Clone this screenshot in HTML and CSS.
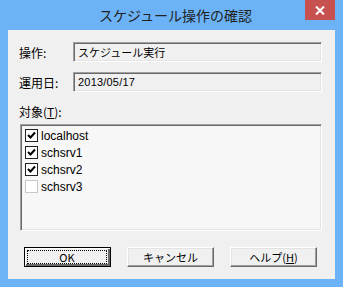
FILE: index.html
```html
<!DOCTYPE html>
<html lang="ja">
<head>
<meta charset="UTF-8" />
<meta name="viewport" content="width=device-width, initial-scale=1" />
<title>スケジュール操作の確認</title>
<link rel="stylesheet" href="styles.css">
</head>
<body>

<div class="window">
  <div class="titlebar">
    <span></span>
    <div class="title">スケジュール操作の確認</div>
    <button class="close" aria-label="閉じる">
      <svg width="10" height="9" viewBox="0 0 10 9"><path d="M1 0.5 L9 8.5 M9 0.5 L1 8.5" stroke="#fff" stroke-width="2"/></svg>
    </button>
  </div>

  <div class="client">
    <div class="row">
      <label class="label">操作:</label>
      <div class="field">スケジュール実行</div>
    </div>
    <div class="row">
      <label class="label">運用日:</label>
      <div class="field num">2013/05/17</div>
    </div>

    <div class="list-label">対象(<u>T</u>):</div>
    <div class="list">
      <div class="item"><span class="check on"></span>localhost</div>
      <div class="item"><span class="check on"></span>schsrv1</div>
      <div class="item"><span class="check on"></span>schsrv2</div>
      <div class="item"><span class="check off"></span>schsrv3</div>
    </div>

    <div class="buttons">
      <button class="btn default"><span class="focus">OK</span></button>
      <button class="btn">キャンセル</button>
      <button class="btn">ヘルプ(<u>H</u>)</button>
    </div>
  </div>
</div>

</body>
</html>
```

FILE: styles.css
```css
body {
  margin: 0;
  font-family: "Noto Sans CJK JP", "Liberation Sans", sans-serif;
  font-size: 12px;
  color: #000;
}
.window {
  width: 343px;
  height: 287px;
  box-sizing: border-box;
  background: #6bb3f6;
  padding: 0 8px 8px 8px;
  display: flex;
  flex-direction: column;
}
.titlebar {
  height: 30px;
  display: grid;
  grid-template-columns: 1fr auto 1fr;
  align-items: start;
}
.title {
  font-size: 14px;
  line-height: 31px;
  color: #222;
  margin-left: 8px;
}
.close {
  justify-self: end;
  width: 30px;
  height: 20px;
  border: none;
  padding: 0;
  background: #c75050;
  display: flex;
  align-items: center;
  justify-content: center;
}
.client {
  flex: 1;
  background: #f0f0f0;
  padding: 12px 13px 0 11px;
  display: flex;
  flex-direction: column;
}
.row {
  display: flex;
  align-items: center;
  height: 20px;
  margin-bottom: 10px;
}
.label {
  width: 54px;
}
.field {
  flex: 1;
  height: 20px;
  box-sizing: border-box;
  border: 1px solid;
  border-color: #a0a0a0 #fff #fff #a0a0a0;
  box-shadow: inset 1px 1px #696969, inset -1px -1px #e3e3e3;
  padding: 0 4px;
  line-height: 18px;
  font-size: 11px;
}
.field.num {
  font-family: "Liberation Sans", sans-serif;
  font-size: 11px;
  letter-spacing: 0.2px;
}
.list-label {
  margin-top: 3px;
  line-height: 14px;
  height: 14px;
}
.list-label u, .btn u {
  text-decoration-thickness: 1px;
}
.list {
  margin: 5px 0 0 1px;
  height: 107px;
  box-sizing: border-box;
  border: 1px solid;
  border-color: #a0a0a0 #fff #fff #a0a0a0;
  box-shadow: inset 1px 1px #696969, inset -1px -1px #e3e3e3;
  background: #f7f7f7;
  padding: 2px 0 0 4px;
}
.item {
  height: 17px;
  display: flex;
  align-items: center;
  font-family: "Liberation Sans", sans-serif;
  font-size: 12px;
}
.check {
  width: 13px;
  height: 13px;
  box-sizing: border-box;
  margin-right: 3px;
  background: #fff;
}
.check.on {
  border: 1px solid #222;
  box-shadow: inset 0 0 0 1px #fff;
  background: #fff url("data:image/svg+xml,%3Csvg xmlns='http://www.w3.org/2000/svg' width='11' height='11'%3E%3Cpath d='M2 5 L4.5 7.5 L9 2.5' stroke='%23000' stroke-width='2' fill='none'/%3E%3C/svg%3E") no-repeat center;
}
.check.off {
  border: 1px solid #c8c8c8;
}
.buttons {
  display: flex;
  gap: 16px;
  margin: 16px 0 0 5px;
}
.btn {
  width: 87px;
  height: 20px;
  box-sizing: border-box;
  padding: 0;
  font-family: "Noto Sans CJK JP", "Liberation Sans", sans-serif;
  font-size: 11px;
  line-height: 16px;
  color: #000;
  background: #f0f0f0;
  border: 1px solid;
  border-color: #fff #696969 #696969 #fff;
  box-shadow: inset -1px -1px #a0a0a0, inset 1px 1px #e3e3e3;
}
.btn.default {
  border: 1px solid #000;
  box-shadow: inset 1px 1px #fff, inset -2px -2px #696969, inset -1px -1px #a0a0a0;
  padding: 2px;
}
.focus {
  display: block;
  height: 14px;
  line-height: 13px;
  border: 1px dotted #000;
  box-sizing: border-box;
  margin-right: 1px;
}
```
